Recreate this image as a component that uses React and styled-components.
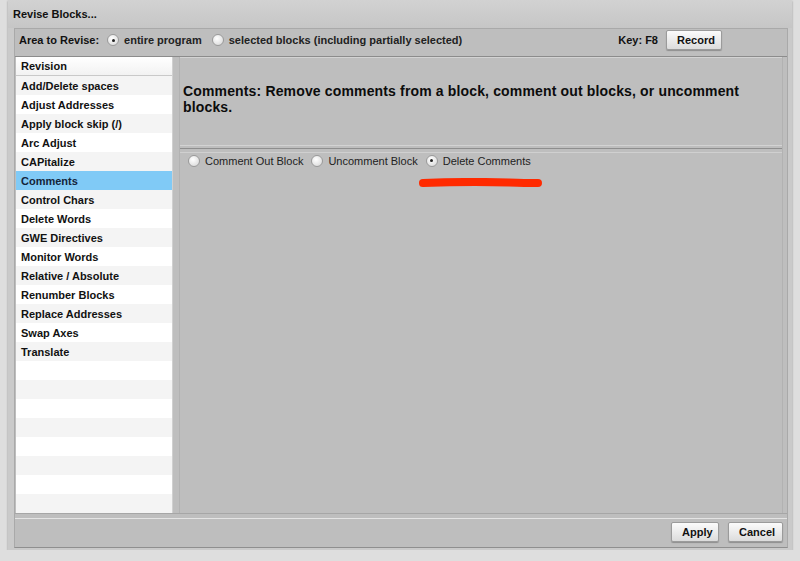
import styled, { createGlobalStyle } from "styled-components";

const Global = createGlobalStyle`
	html, body {
		margin: 0;
		padding: 0;
		background: #dedede;
		font-family: "Liberation Sans", Arial, sans-serif;
		color: #111;
	}
`;

const Window = styled.div`
	width: 784px;
	height: 550px;
	margin: 0 8px;
	background: #cacaca;
	box-shadow: 0 1px 2px rgba(0, 0, 0, 0.35);
	display: flex;
	flex-direction: column;
`;

const TitleBar = styled.div`
	height: 28px;
	padding-left: 5px;
	display: flex;
	align-items: center;
	font-size: 11px;
	font-weight: bold;
	color: #111;
	background: linear-gradient(#d2d2d2, #c6c6c6);
`;

const Panel = styled.div`
	flex: 1;
	margin: 0 4px 2px 6px;
	background: #bebebe;
	border: 1px solid #a9a9a9;
	border-bottom-color: #8f8f8f;
	display: flex;
	flex-direction: column;
`;

const TopRow = styled.div`
	height: 22px;
	display: flex;
	align-items: center;
	padding: 0 65px 5px 4px;
	border-bottom: 1px solid #8c8c8c;
	font-size: 11px;
	font-weight: bold;
	gap: 8px;
`;

const Spacer = styled.div`
	flex: 1;
`;

const RadioLabel = styled.label`
	display: flex;
	align-items: center;
	gap: 5px;
	font-size: 11px;
	font-weight: ${(p) => (p.$bold ? "bold" : "normal")};
	color: #222;
	margin-right: ${(p) => p.$gap || 0}px;
`;

const Radio = styled.span`
	width: 10px;
	height: 10px;
	border-radius: 50%;
	border: 1px solid #9a9a9a;
	background: radial-gradient(circle at 40% 35%, #ffffff, #d4d4d4);
	display: flex;
	align-items: center;
	justify-content: center;
	&::after {
		content: "";
		width: 3px;
		height: 3px;
		border-radius: 50%;
		background: ${(p) => (p.$on ? "#222" : "transparent")};
	}
`;

const Button = styled.button`
	height: 20px;
	padding: 0 10px;
	font-family: "Liberation Sans", Arial, sans-serif;
	font-size: 11px;
	font-weight: bold;
	color: #111;
	border: 1px solid #9b9b9b;
	border-radius: 2px;
	background: linear-gradient(#fbfbfb, #dcdcdc);
	box-shadow: 0 1px 1px rgba(0, 0, 0, 0.25);
	width: ${(p) => p.$w}px;
`;

const Main = styled.div`
	display: flex;
	gap: 6px;
	padding: 0 4px 0 1px;
	height: 456px;
	border-bottom: 1px solid #a6a6a6;
`;

const List = styled.div`
	width: 156px;
	background: #fff;
	overflow: hidden;
	border-right: 1px solid #d0d0d0;
`;

const ListHeader = styled.div`
	height: 18px;
	padding-left: 5px;
	display: flex;
	align-items: center;
	font-size: 11px;
	font-weight: bold;
	background: linear-gradient(#ffffff, #f2f2f2);
	border-bottom: 1px solid #c9c9c9;
`;

const Row = styled.div`
	height: 19px;
	padding-left: 5px;
	display: flex;
	align-items: center;
	font-size: 11px;
	font-weight: bold;
	color: ${(p) => (p.$sel ? "#14243a" : "#111")};
	background: ${(p) => (p.$sel ? "#80caf6" : p.$odd ? "#ffffff" : "#f4f4f4")};
`;

const Content = styled.div`
	flex: 1;
	display: flex;
	flex-direction: column;
	position: relative;
	border-left: 1px solid #b2b2b2;
	border-right: 1px solid #b2b2b2;
`;

const Description = styled.div`
	height: 89px;
	padding: 0 40px 6px 3px;
	box-sizing: border-box;
	display: flex;
	align-items: center;
	font-size: 14px;
	font-weight: bold;
	letter-spacing: 0.15px;
	line-height: 16px;
	color: #0c0c0c;
	border-top: 1px solid #d3d3d3;
	border-bottom: 1px solid #d3d3d3;
`;

const Divider = styled.div`
	height: 3px;
	border-top: 1px solid #8e8e8e;
	border-bottom: 1px solid #d0d0d0;
	margin-top: 2px;
`;

const Options = styled.div`
	height: 15px;
	display: flex;
	align-items: center;
	padding-left: 8px;
	gap: 8px;
`;

const Mark = styled.svg`
	position: absolute;
	left: 239px;
	top: 121px;
`;

const Footer = styled.div`
	flex: 1;
	display: flex;
	align-items: center;
	justify-content: flex-end;
	gap: 9px;
	padding: 0 4px 2px 0;
	border-top: 1px solid #e4e4e4;
	margin-top: 4px;
`;

const items = [
	"Add/Delete spaces",
	"Adjust Addresses",
	"Apply block skip (/)",
	"Arc Adjust",
	"CAPitalize",
	"Comments",
	"Control Chars",
	"Delete Words",
	"GWE Directives",
	"Monitor Words",
	"Relative / Absolute",
	"Renumber Blocks",
	"Replace Addresses",
	"Swap Axes",
	"Translate",
];

const rows = [...items, ...Array(8).fill("")];

export default function App() {
	return (
		<>
			<Global />
			<Window>
				<TitleBar>Revise Blocks...</TitleBar>
				<Panel>
					<TopRow>
						<span>Area to Revise:</span>
						<RadioLabel $bold $gap={2}>
							<Radio $on />
							entire program
						</RadioLabel>
						<RadioLabel $bold>
							<Radio />
							selected blocks (including partially selected)
						</RadioLabel>
						<Spacer />
						<span>Key: F8</span>
						<Button $w={56}>Record</Button>
					</TopRow>
					<Main>
						<List>
							<ListHeader>Revision</ListHeader>
							{rows.map((t, i) => (
								<Row key={i} $odd={i % 2 === 1} $sel={t === "Comments"}>
									{t}
								</Row>
							))}
						</List>
						<Content>
							<Description>
								Comments: Remove comments from a block, comment out blocks, or uncomment
								blocks.
							</Description>
							<Divider />
							<Options>
								<RadioLabel>
									<Radio />
									Comment Out Block
								</RadioLabel>
								<RadioLabel>
									<Radio />
									Uncomment Block
								</RadioLabel>
								<RadioLabel>
									<Radio $on />
									Delete Comments
								</RadioLabel>
							</Options>
							<Mark width="126" height="10" viewBox="0 0 126 10">
								<path
									d="M4 5 C30 4, 60 3.5, 90 4.5 S114 5, 119 5"
									stroke="#ff2a00"
									strokeWidth="8"
									strokeLinecap="round"
									fill="none"
								/>
							</Mark>
						</Content>
					</Main>
					<Footer>
						<Button $w={48}>Apply</Button>
						<Button $w={55}>Cancel</Button>
					</Footer>
				</Panel>
			</Window>
		</>
	);
}
